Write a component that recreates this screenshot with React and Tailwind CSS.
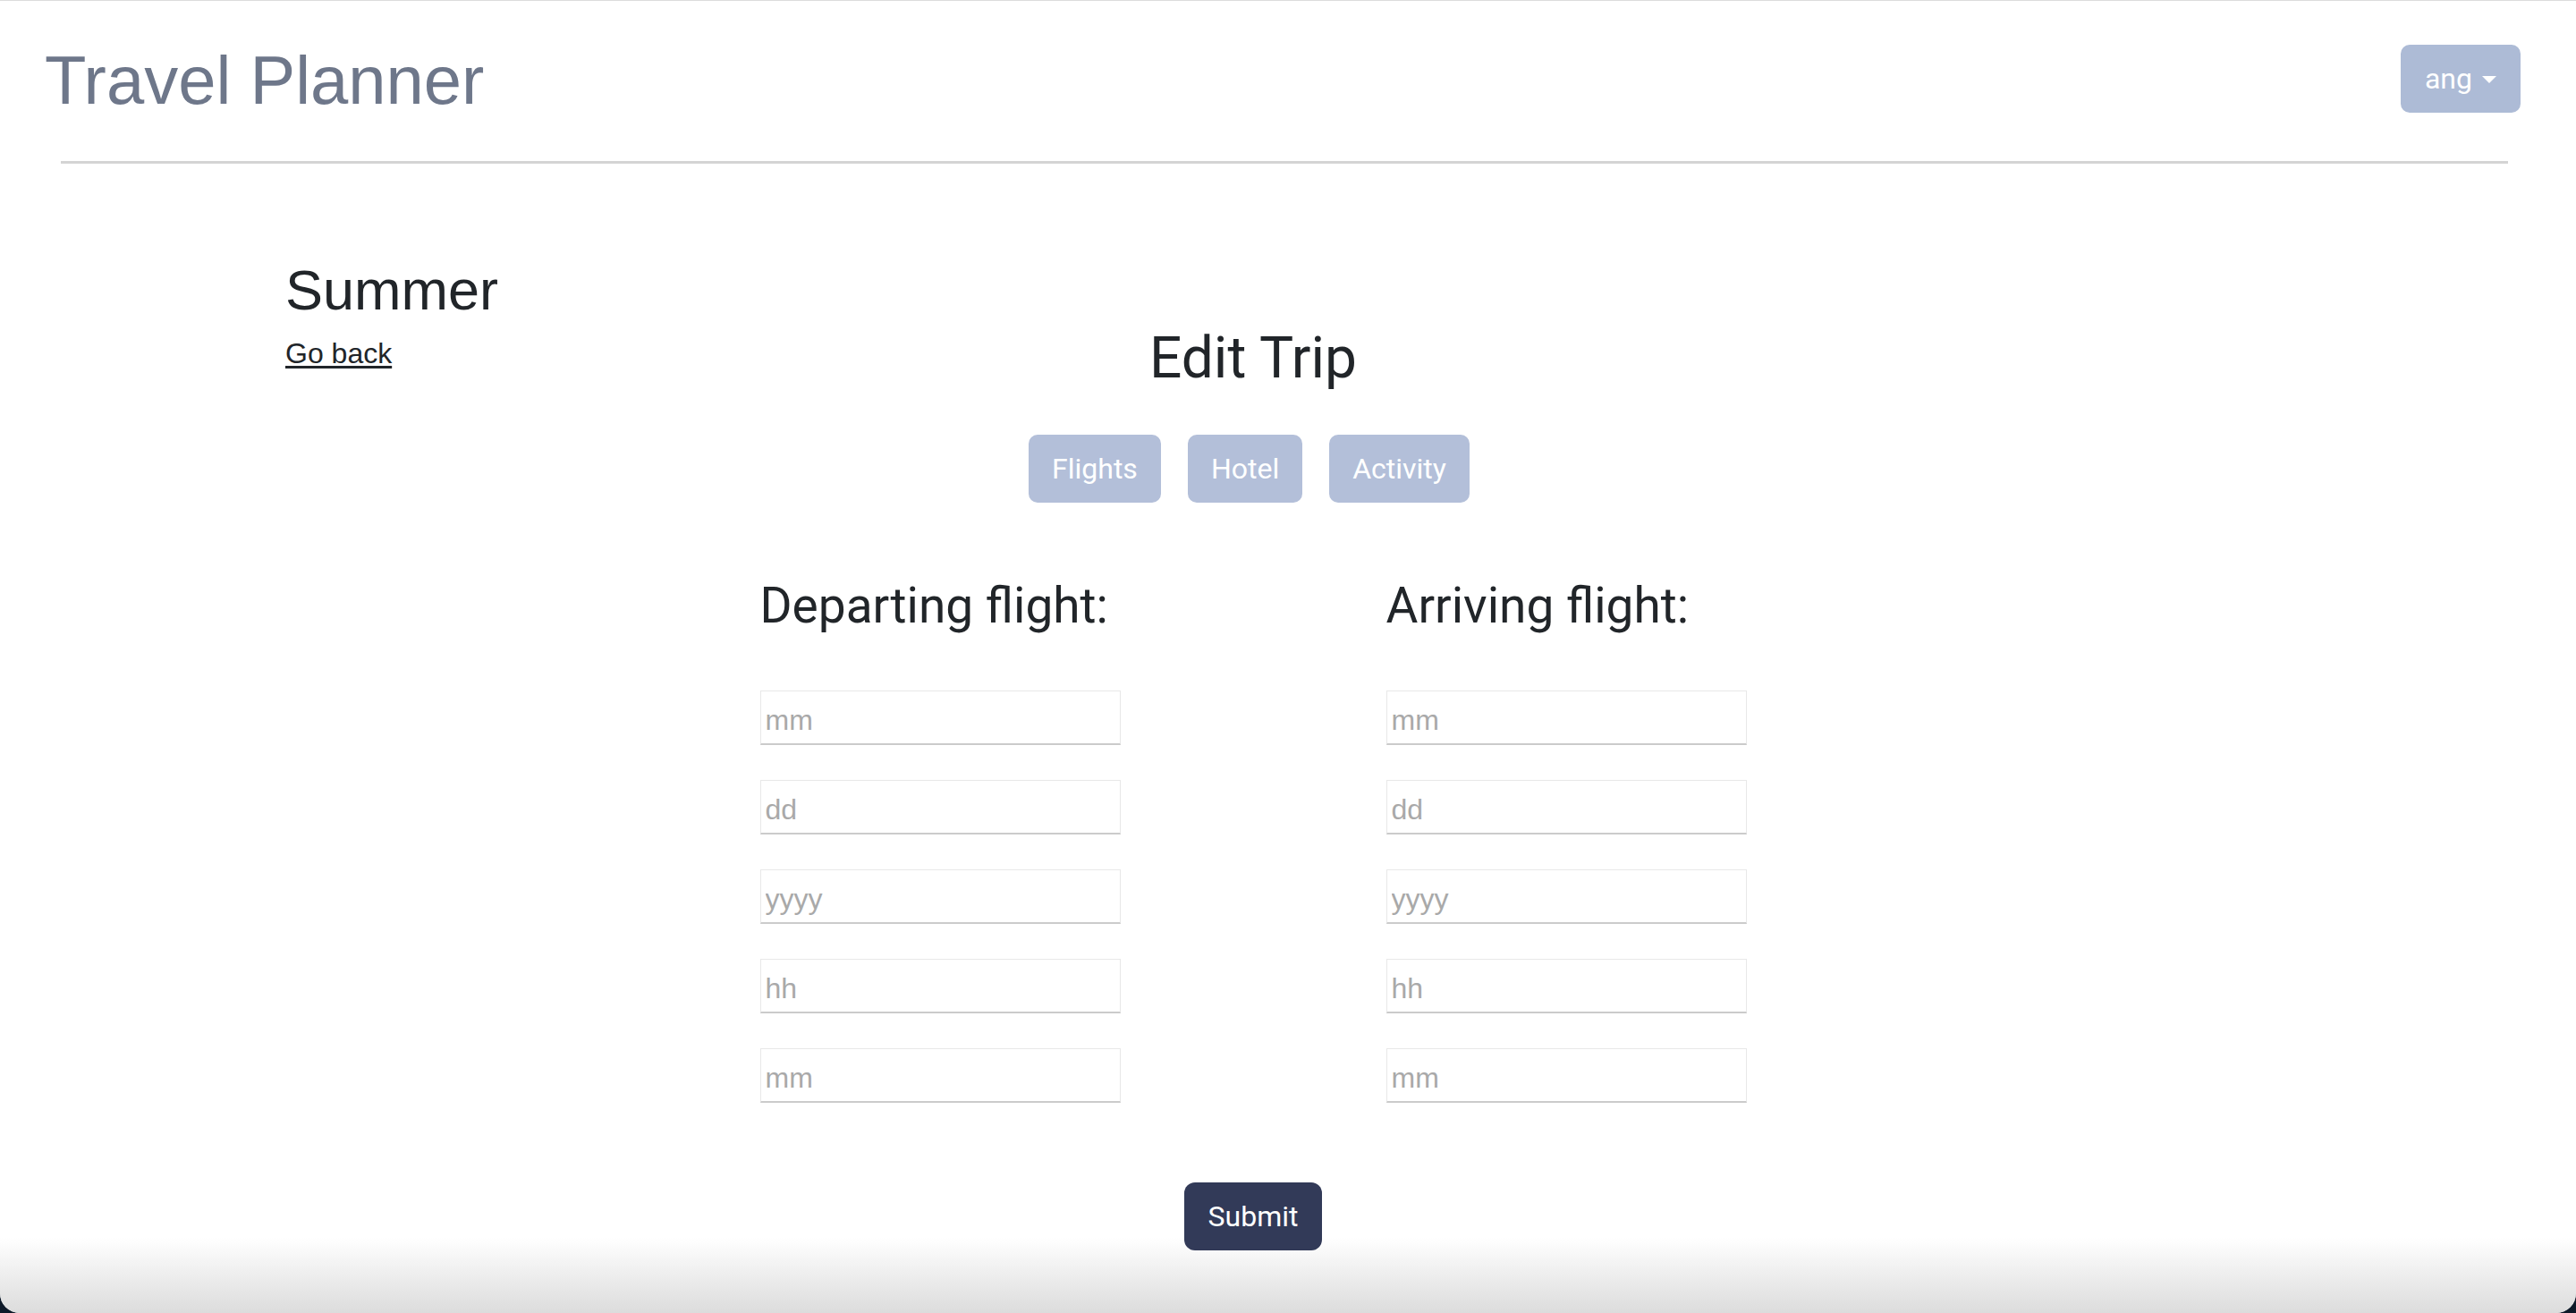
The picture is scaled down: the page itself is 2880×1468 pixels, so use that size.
import { useState } from "react";

const sans = "font-['Liberation_Sans',Arial,sans-serif]";
const ui = "font-['Roboto','Inter',sans-serif]";

function FlightColumn({ title }) {
  const fields = ["mm", "dd", "yyyy", "hh", "mm"];

  return (
    <div className="w-[403px] flex flex-col">
      <h3 className={`${ui} text-[55px] leading-none text-[#212529]`}>{title}</h3>

      <div className="mt-[67px] flex flex-col gap-[39px]">
        {fields.map((placeholder, index) => (
          <input
            key={`${placeholder}-${index}`}
            type="text"
            placeholder={placeholder}
            className={`${sans} h-[61px] w-full border border-[#e8e8e8] border-b-2 border-b-[#cbcbcb] bg-white pl-[5px] pt-[6px] text-[32px] text-[#333] placeholder:text-[#a9a9a9] outline-none`}
          />
        ))}
      </div>
    </div>
  );
}

export default function App() {
  const [tab, setTab] = useState("flights");
  const tabs = [
    ["flights", "Flights"],
    ["hotel", "Hotel"],
    ["activity", "Activity"],
  ];

  return (
    <div className="h-[1468px] w-full overflow-hidden bg-[#0e1a29]">
      <div className="relative h-full w-full overflow-hidden rounded-b-[22px] border-t border-[#dcdcdc] bg-white">
        <header className="flex items-start justify-between pl-[50px] pr-[62px] pt-[49px]">
          <h1 className={`${sans} mt-[2px] text-[76px] leading-none text-[#6e778a]`}>
            Travel Planner
          </h1>

          <button
            className={`${ui} flex h-[76px] items-center gap-[11px] rounded-[10px] bg-[#adbbd6] px-[27px] text-[32px] text-white`}
          >
            ang
            <span className="mt-[2px] h-0 w-0 border-x-[8px] border-t-[8px] border-x-transparent border-t-white" />
          </button>
        </header>

        <div className="ml-[68px] mr-[76px] mt-[52px] h-[3px] bg-[#d4d4d4]" />

        <main className="mt-[110px] flex pl-[319px] pr-[637px]">
          <div className="w-[240px] shrink-0">
            <h2 className={`${sans} text-[63px] leading-none text-[#212529]`}>Summer</h2>
            <a href="#" className={`${sans} mt-[23px] block text-[32px] leading-none text-[#212529] underline underline-offset-[3px]`}>
              Go back
            </a>
          </div>

          <div className="flex flex-1 flex-col items-center pt-[76px]">
            <h2 className={`${ui} text-[64px] leading-none text-[#212529]`}>Edit Trip</h2>

            <div className="mt-[53px] mr-[9px] flex gap-[30px]">
              {tabs.map(([id, label]) => (
                <button
                  key={id}
                  onClick={() => setTab(id)}
                  className={`${ui} h-[76px] rounded-[10px] bg-[#b3bfd9] px-[26px] text-[32px] text-white`}
                >
                  {label}
                </button>
              ))}
            </div>

            {tab === "flights" && (
              <div className="mt-[88px] flex gap-[297px]">
                <FlightColumn title="Departing flight:" />
                <FlightColumn title="Arriving flight:" />
              </div>
            )}

            <button
              className={`${ui} relative z-10 mt-[89px] h-[76px] rounded-[12px] bg-[#323a58] px-[27px] text-[32px] text-white`}
            >
              Submit
            </button>
          </div>
        </main>

        <div className="pointer-events-none absolute inset-x-0 bottom-0 h-[84px] bg-gradient-to-b from-white/0 to-[#dcdcdc]" />
      </div>
    </div>
  );
}
